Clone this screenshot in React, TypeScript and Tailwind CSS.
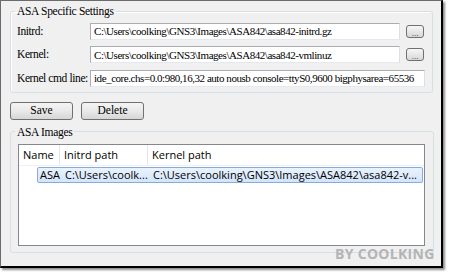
const serif = { fontFamily: '"Liberation Serif", "Noto Sans CJK TC", serif' };

function Dots() {
  return (
    <button className="w-[18px] h-[13px] rounded-[3px] border border-[#707070] bg-gradient-to-b from-[#f6f6f6] to-[#d8d8d8] flex items-end justify-center pb-[1px]">
      <span className="text-[9px] leading-[6px] text-[#333]" style={serif}>...</span>
    </button>
  );
}

function TextBox({ value, wide }: { value: string; wide?: boolean }) {
  return (
    <div
      className={`${wide ? "w-[335px]" : "w-[310px]"} h-[17px] shrink-0 bg-white border border-[#abadb3] border-b-[#e3e9ef] border-r-[#dbdfe6] flex items-center pl-[3px] overflow-hidden whitespace-nowrap text-[11px] tracking-[-0.45px] text-black`}
      style={serif}
    >
      {value}
    </div>
  );
}

function Row({ label, value, browse = true }: { label: string; value: string; browse?: boolean }) {
  return (
    <div className="flex items-center">
      <div className="w-[73px] shrink-0 whitespace-nowrap text-[11.5px] tracking-[-0.4px] text-black" style={serif}>
        {label}
      </div>
      <TextBox value={value} wide={!browse} />
      {browse && (
        <div className="ml-[6px]">
          <Dots />
        </div>
      )}
    </div>
  );
}

function WinButton({ children }: { children: string }) {
  return (
    <button
      className="w-[63px] h-[18px] rounded-[3px] border border-[#707070] bg-gradient-to-b from-[#f4f4f4] via-[#e9e9e9] to-[#d6d6d6] text-[11.5px] text-black leading-none"
      style={serif}
    >
      {children}
    </button>
  );
}

export default function App() {
  const ui = { fontFamily: '"Open Sans", "Noto Sans", sans-serif' };
  return (
    <div className="w-[450px] h-[273px] bg-white relative">
      <div className="w-[443px] h-[268px] bg-[#f0f0f0] border-l border-t border-[#6b6b6b] border-r-2 border-b-2 border-r-black border-b-black shadow-[2px_2px_2px_rgba(0,0,0,0.45)] flex flex-col pl-[9px] pr-[9px]">
        <fieldset className="mt-[3px] w-[423px] min-w-0 border border-[#d5dfe5] rounded-[3px] px-[6px] pt-[5px] pb-[5px] shadow-[inset_1px_1px_0_#fff]">
          <legend className="-ml-[2px] px-[2px] text-[11.5px] leading-[14px] tracking-[-0.3px] text-black" style={serif}>
            ASA Specific Settings
          </legend>
          <div className="flex flex-col gap-[6px]">
            <Row label="Initrd:" value="C:\Users\coolking\GNS3\Images\ASA842\asa842-initrd.gz" />
            <Row label="Kernel:" value="C:\Users\coolking\GNS3\Images\ASA842\asa842-vmlinuz" />
            <Row
              label="Kernel cmd line:"
              browse={false}
              value="ide_core.chs=0.0:980,16,32 auto nousb console=ttyS0,9600 bigphysarea=65536"
            />
          </div>
        </fieldset>

        <div className="mt-[9px] flex gap-[8px]">
          <WinButton>Save</WinButton>
          <WinButton>Delete</WinButton>
        </div>

        <fieldset className="mt-[5px] w-[424px] min-w-0 border border-[#d5dfe5] rounded-[3px] pl-[7px] pr-[8px] pb-[6px] pt-[5px]">
          <legend className="-ml-[3px] px-[2px] text-[11.5px] leading-[14px] tracking-[-0.3px] text-black" style={serif}>
            ASA Images
          </legend>
          <div className="h-[102px] bg-white border border-[#828790] flex flex-col overflow-hidden text-[11px] text-black" style={ui}>
            <div className="h-[21px] flex items-stretch border-b border-[#eef0f3]">
              <div className="w-[41px] border-r border-[#e5e5e5] flex items-center pl-[4px]">Name</div>
              <div className="w-[88px] border-r border-[#e5e5e5] flex items-center pl-[4px]">Initrd path</div>
              <div className="flex-1 flex items-center pl-[4px]">Kernel path</div>
            </div>
            <div className="mt-[1px] ml-[18px] mr-[1px] h-[16px] flex items-center rounded-[2px] border border-[#84acdd] bg-gradient-to-b from-[#eaf3fd] to-[#d3e5fb] whitespace-nowrap">
              <div className="w-[23px] pl-[2px] overflow-hidden">ASA</div>
              <div className="w-[88px] pl-[4px] overflow-hidden">C:\Users\coolk...</div>
              <div className="flex-1 min-w-0 pl-[4px] overflow-hidden">C:\Users\coolking\GNS3\Images\ASA842\asa842-v...</div>
            </div>
          </div>
        </fieldset>
      </div>
      <div
        className="absolute left-[335px] top-[243px] text-[14px] font-bold text-[#b4b4b4] tracking-[0.3px]"
        style={{ fontFamily: '"Open Sans", sans-serif' }}
      >
        BY COOLKING
      </div>
    </div>
  );
}
